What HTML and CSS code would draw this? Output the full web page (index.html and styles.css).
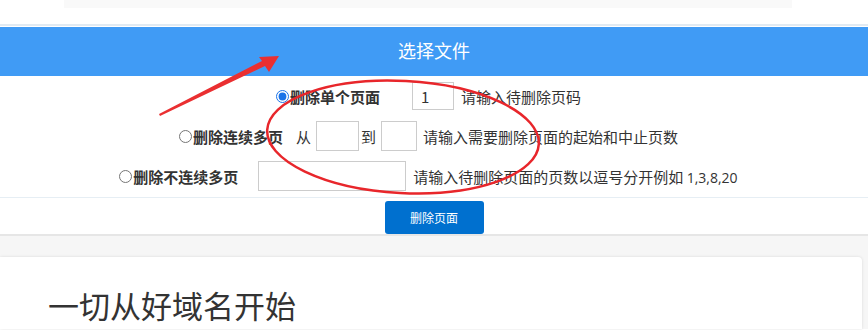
FILE: index.html
```html
<!DOCTYPE html>
<html lang="zh-CN">
<head>
  <meta charset="UTF-8">
  <title>删除PDF页面</title>
  <link rel="stylesheet" href="styles.css">
</head>
<body>
  <div class="top-box"></div>

  <div class="upload">
    <div class="upload-bar">选择文件</div>
  </div>

  <form class="options" onsubmit="event.preventDefault();">
    <div class="row">
      <label class="opt"><input type="radio" name="mode" value="single" checked>删除单个页面</label>
      <input type="text" class="num gap-l" value="1">
      <span class="hint">请输入待删除页码</span>
    </div>
    <div class="row">
      <label class="opt"><input type="radio" name="mode" value="range">删除连续多页</label>
      <span class="word from">从</span>
      <input type="text" class="num from-box">
      <span class="word">到</span>
      <input type="text" class="num to-box">
      <span class="hint">请输入需要删除页面的起始和中止页数</span>
    </div>
    <div class="row">
      <label class="opt"><input type="radio" name="mode" value="list">删除不连续多页</label>
      <input type="text" class="list-box">
      <span class="hint">请输入待删除页面的页数以逗号分开例如 <span class="digits">1,3,8,20</span></span>
    </div>
    <div class="actions">
      <button type="submit">删除页面</button>
    </div>
  </form>

  <div class="page">
    <div class="card">
      <h2>一切从好域名开始</h2>
    </div>
  </div>

  <svg class="marks" width="868" height="330" viewBox="0 0 868 330">
    <ellipse cx="403" cy="137" rx="136" ry="56" fill="none" stroke="#e8262b" stroke-width="2.5" transform="rotate(3 403 137)"/>
    <polygon points="159,114 262,61 259,57 279,56 269,72 265,66 160,116" fill="#ea2f31"/>
  </svg>
</body>
</html>
```

FILE: styles.css
```css
body {
  margin: 0;
  font-family: "Noto Sans CJK SC", "Noto Sans", sans-serif;
  color: #333;
  background-color: #fff;
  position: relative;
  height: 330px;
  overflow: hidden;
}

.top-box {
  margin: 0 76px 0 64px;
  height: 8px;
  background-color: #f9f9f9;
}

.upload {
  margin-top: 16px;
  border-top: 2px solid #e1eaf2;
  padding-top: 1px;
}

.upload-bar {
  height: 49px;
  line-height: 46px;
  text-align: center;
  background-color: #409bf5;
  color: #fff;
  font-size: 18px;
}

.options {
  margin: 0;
}

.row {
  display: flex;
  justify-content: center;
  align-items: center;
  height: 40px;
  font-size: 15px;
  padding-right: 11px;
}

.opt {
  display: flex;
  align-items: center;
  font-weight: bold;
}

.opt input {
  margin: 0 1px 0 0;
  width: 13px;
  height: 13px;
  accent-color: #1a73e8;
}

.row input[type="text"] {
  box-sizing: border-box;
  height: 30px;
  border: 1px solid #ccc;
  font-family: inherit;
  font-size: 15px;
  color: #333;
  padding: 0 8px;
  outline: none;
}

.num.gap-l {
  width: 42px;
  height: 28px !important;
  margin-left: 32px;
}

.hint {
  margin-left: 7px;
}

.digits {
  font-family: "Open Sans", sans-serif;
  font-size: 14px;
}

.word.from {
  margin-left: 13px;
  margin-right: 5px;
}

.from-box {
  width: 43px;
  margin-right: 2px;
}

.to-box {
  width: 36px;
  margin-left: 5px;
  margin-right: -1px;
}

.list-box {
  width: 148px;
  margin-left: 20px;
}

.actions {
  margin-top: 1px;
  border-top: 1px solid #e6eef4;
  border-bottom: 2px solid #e6e6e6;
  padding: 3px 0 0;
  text-align: center;
}

button {
  display: block;
  margin: 0 auto;
  width: 99px;
  height: 33px;
  background-color: #0070cf;
  color: #fff;
  border: none;
  border-radius: 3px;
  font-family: inherit;
  font-size: 12px;
  cursor: pointer;
}

.page {
  background-color: #f6f6f6;
  padding: 21px 6px 0 0;
}

.card {
  background-color: #fff;
  border-radius: 0 4px 0 0;
  box-shadow: 0 0 3px rgba(0, 0, 0, 0.12);
  padding: 28px 48px 4px;
}

.card h2 {
  margin: 0;
  font-size: 31px;
  font-weight: normal;
  line-height: 40px;
  color: #333;
}

.marks {
  position: absolute;
  top: 0;
  left: 0;
  pointer-events: none;
}
```
